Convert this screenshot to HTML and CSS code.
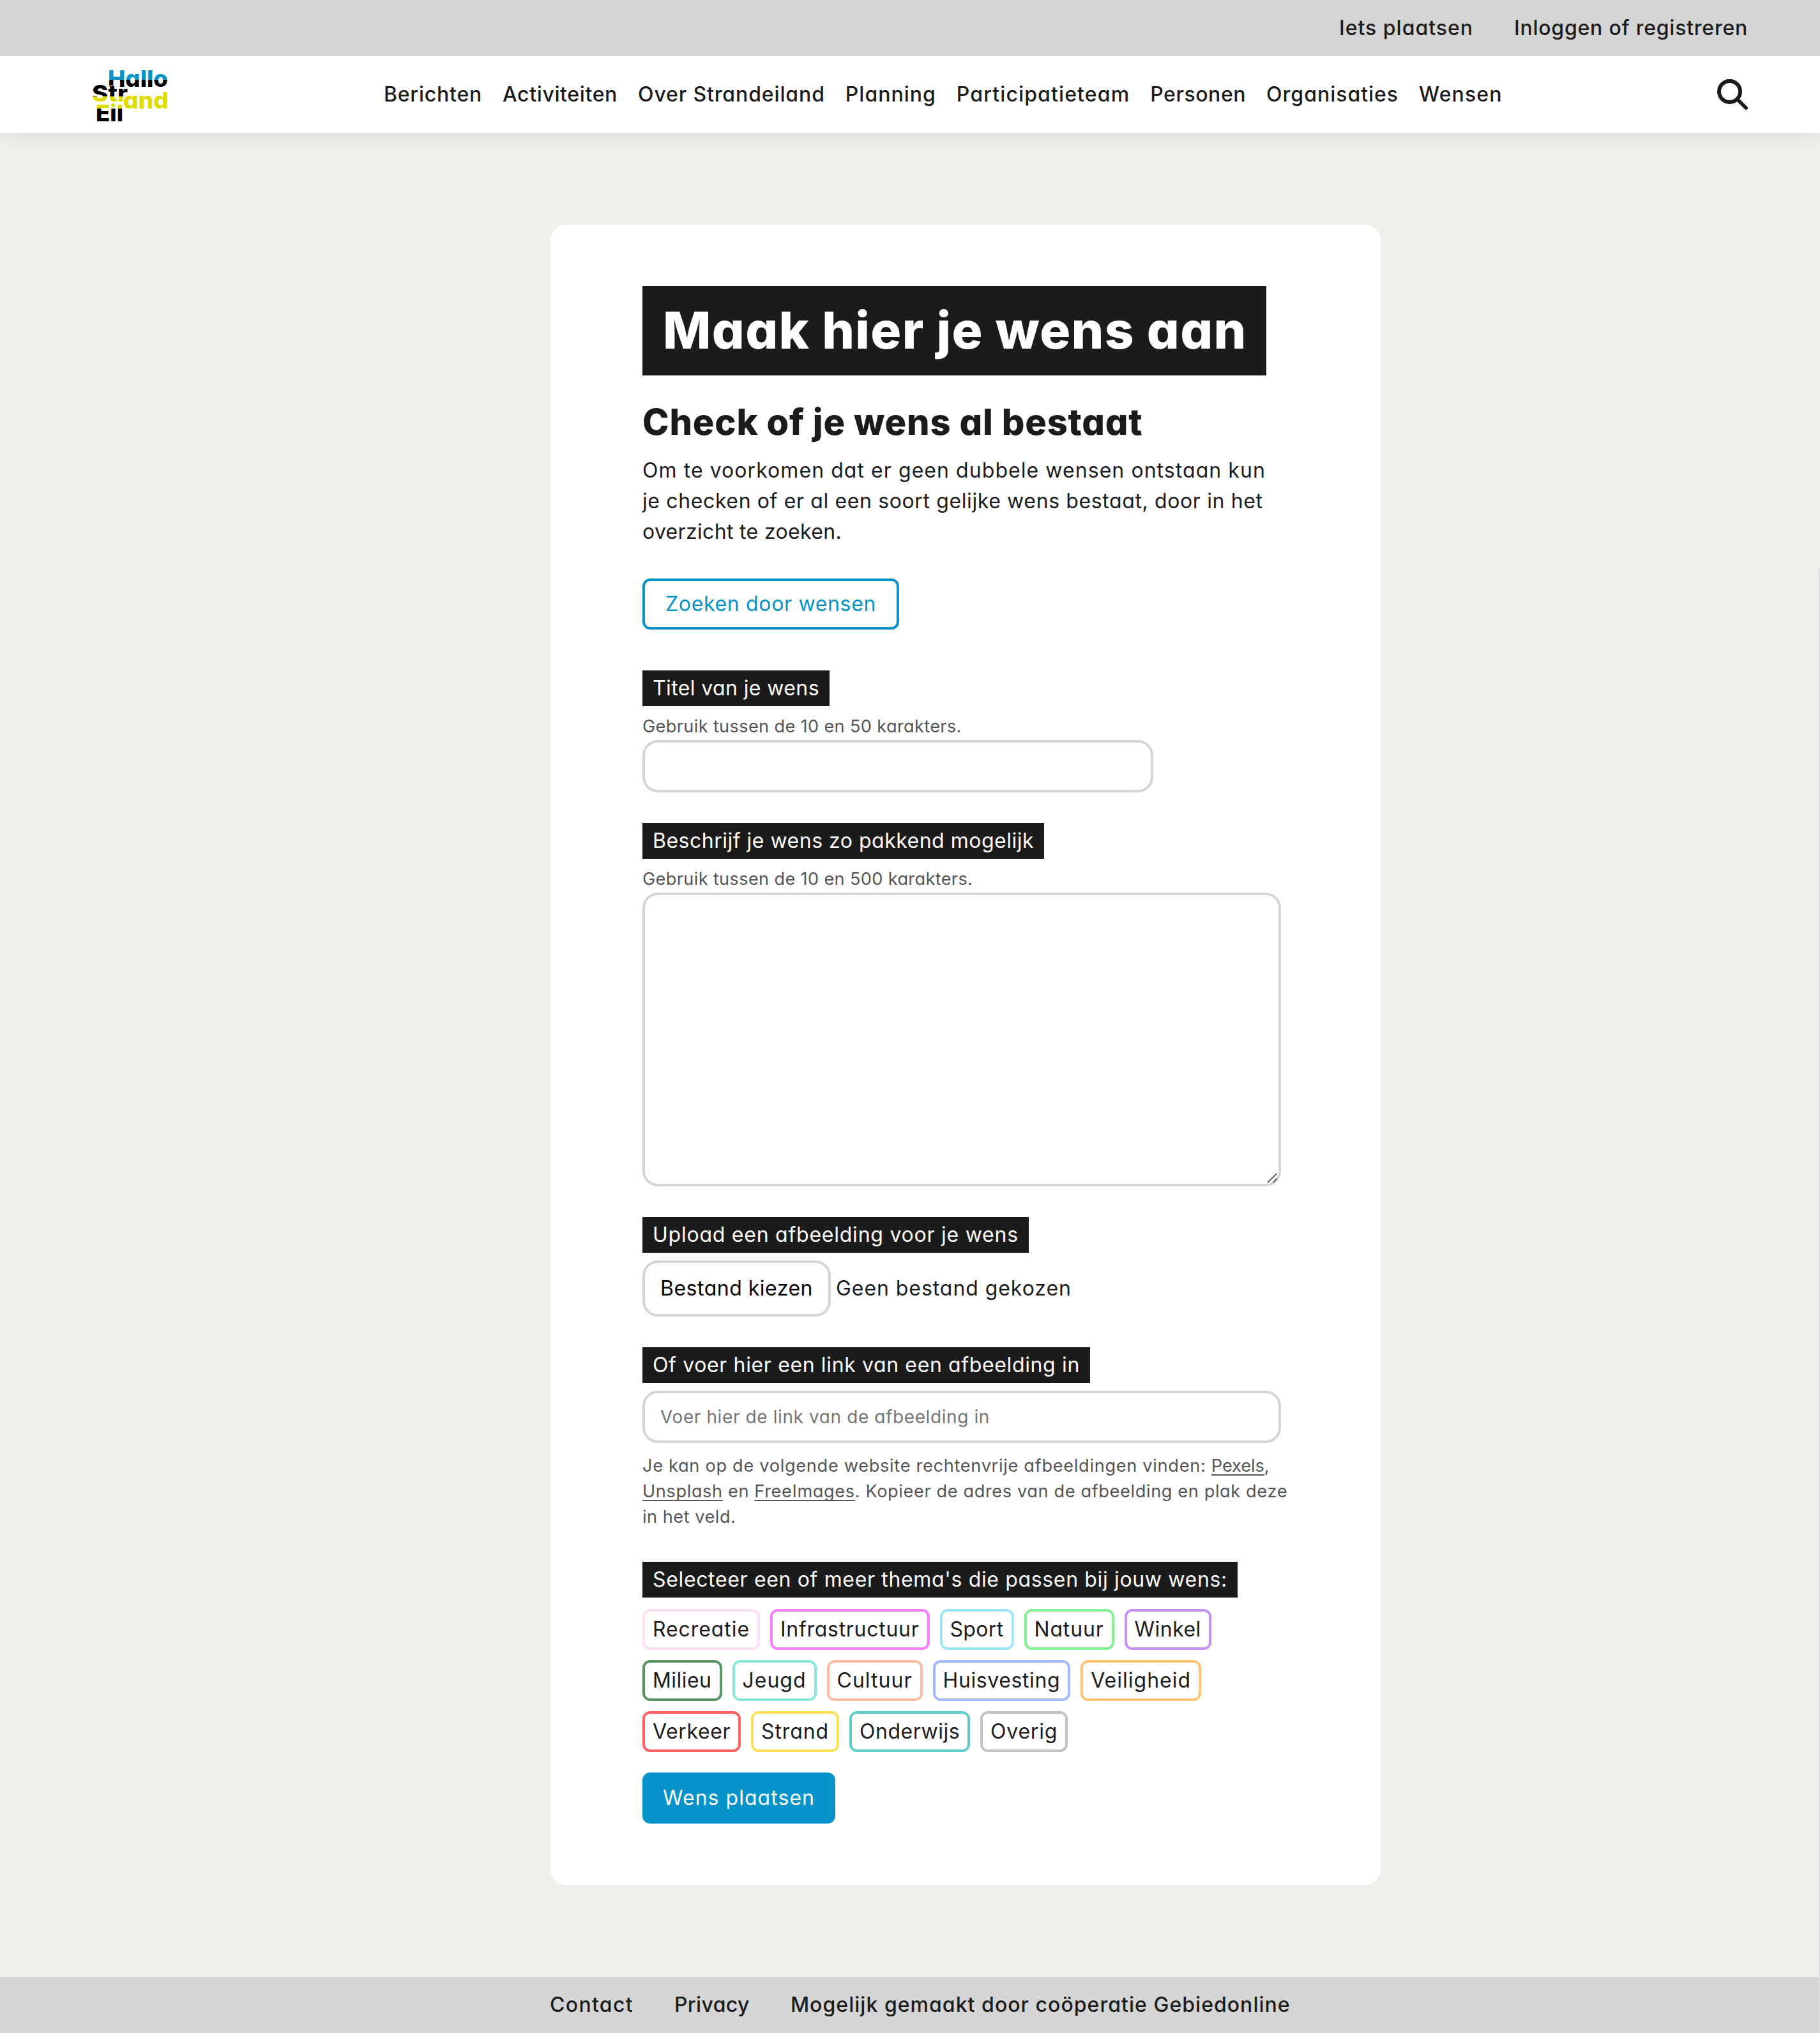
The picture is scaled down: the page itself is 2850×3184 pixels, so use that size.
FILE: index.html
```html
<!DOCTYPE html>
<html lang="nl">
<head>
<meta charset="utf-8">
<title>Maak hier je wens aan</title>
<link rel="stylesheet" href="styles.css">
</head>
<body>
<div class="topbar">
  <a class="ls-wide">Iets plaatsen</a>
  <a class="ls-mid">Inloggen of registreren</a>
</div>
<header class="header">
  <svg class="logo" width="120" height="84" viewBox="144 108 120 84" role="img" aria-label="Hallo Strand Eiland">
    <defs>
      <linearGradient id="hallo" gradientUnits="userSpaceOnUse" x1="0" y1="108" x2="0" y2="192">
        <stop offset=".205" stop-color="#0693c9"/><stop offset=".205" stop-color="#000"/>
      </linearGradient>
      <linearGradient id="str" gradientUnits="userSpaceOnUse" x1="0" y1="108" x2="0" y2="192">
        <stop offset=".512" stop-color="#000"/><stop offset=".512" stop-color="#dfdc00"/>
      </linearGradient>
      <linearGradient id="eil" gradientUnits="userSpaceOnUse" x1="0" y1="108" x2="0" y2="192">
        <stop offset=".738" stop-color="#dfdc00"/><stop offset=".738" stop-color="#000"/>
      </linearGradient>
    </defs>
    <text class="logo-text" x="169" y="136" textLength="94" lengthAdjust="spacingAndGlyphs" fill="url(#hallo)">Hallo</text>
    <text class="logo-text" x="144" y="159" textLength="56" lengthAdjust="spacingAndGlyphs" fill="url(#str)">Str</text>
    <text class="logo-text" x="193" y="170" textLength="71" lengthAdjust="spacingAndGlyphs" fill="#dfdc00">and</text>
    <text class="logo-text" x="150" y="190" textLength="43" lengthAdjust="spacingAndGlyphs" fill="url(#eil)">Eil</text>
  </svg>
  <nav class="nav">
    <a>Berichten</a>
    <a>Activiteiten</a>
    <a>Over Strandeiland</a>
    <a>Planning</a>
    <a>Participatieteam</a>
    <a>Personen</a>
    <a>Organisaties</a>
    <a>Wensen</a>
  </nav>
  <svg class="search" width="48" height="48" viewBox="0 0 48 48" fill="none" stroke="#1b1b1b" stroke-linecap="round">
    <circle cx="19.5" cy="19.4" r="16.5" stroke-width="6"/>
    <path d="M32 32L45.1 45.1" stroke-width="5.6"/>
  </svg>
</header>
<main class="main">
  <form class="card">
    <h1 class="title">Maak hier je wens aan</h1>
    <h2 class="subtitle">Check of je wens al bestaat</h2>
    <p class="intro">
      <span>Om te voorkomen dat er geen dubbele wensen ontstaan kun</span>
      <span>je checken of er al een soort gelijke wens bestaat, door in het</span>
      <span>overzicht te zoeken.</span>
    </p>
    <a class="btn btn-outline">Zoeken door wensen</a>

    <div class="field field-title">
      <label class="label label-title" for="titel">Titel van je wens</label>
      <p class="hint">Gebruik tussen de 10 en 50 karakters.</p>
      <input class="input input-short" id="titel" type="text">
    </div>

    <div class="field">
      <label class="label label-text" for="tekst">Beschrijf je wens zo pakkend mogelijk</label>
      <p class="hint">Gebruik tussen de 10 en 500 karakters.</p>
      <div class="textarea-wrap">
        <textarea class="input textarea" id="tekst"></textarea>
        <svg class="grip" width="18" height="18" viewBox="0 0 18 18" stroke="#555" stroke-width="1.8"><path d="M1 16L15.5 1.8M9.5 16L15.5 10"/></svg>
      </div>
    </div>

    <div class="field">
      <span class="label label-upload">Upload een afbeelding voor je wens</span>
      <div class="file">
        <button class="file-btn" type="button">Bestand kiezen</button>
        <span class="file-name">Geen bestand gekozen</span>
      </div>
    </div>

    <div class="field">
      <label class="label label-link" for="link">Of voer hier een link van een afbeelding in</label>
      <input class="input input-link" id="link" type="text" placeholder="Voer hier de link van de afbeelding in">
      <p class="help">
        <span>Je kan op de volgende website rechtenvrije afbeeldingen vinden: <u>Pexels</u>,</span>
        <span><u>Unsplash</u> en <u>FreeImages</u>. Kopieer de adres van de afbeelding en plak deze</span>
        <span>in het veld.</span>
      </p>
    </div>

    <div class="field field-themes">
      <span class="label label-themes">Selecteer een of meer thema's die passen bij jouw wens:</span>
      <div class="tags">
        <span class="tag recreatie">Recreatie</span>
        <span class="tag infrastructuur">Infrastructuur</span>
        <span class="tag sport">Sport</span>
        <span class="tag natuur">Natuur</span>
        <span class="tag winkel">Winkel</span>
        <span class="tag milieu">Milieu</span>
        <span class="tag jeugd">Jeugd</span>
        <span class="tag cultuur">Cultuur</span>
        <span class="tag huisvesting">Huisvesting</span>
        <span class="tag veiligheid">Veiligheid</span>
        <span class="tag verkeer">Verkeer</span>
        <span class="tag strand">Strand</span>
        <span class="tag onderwijs">Onderwijs</span>
        <span class="tag overig">Overig</span>
      </div>
    </div>
    <button class="btn btn-primary" type="button">Wens plaatsen</button>
  </form>
</main>
<footer class="footer">
  <a>Contact</a>
  <a>Privacy</a>
  <a>Mogelijk gemaakt door coöperatie Gebiedonline</a>
</footer>
<div class="scroll-thumb"></div>
</body>
</html>
```
FILE: styles.css
```css
* { box-sizing: border-box; margin: 0; padding: 0; }
body {
  position: relative;
  min-height: 3184px;
  background: #eff0ea;
  color: #1b1b1b;
  font: 400 32px/48px Inter, "Liberation Sans", sans-serif;
  font-feature-settings: "cv11";
  display: flex;
  flex-direction: column;
}
input, textarea, button { font: inherit; font-feature-settings: inherit; color: inherit; }

.topbar {
  position: relative;
  z-index: 1;
  display: flex;
  justify-content: flex-end;
  gap: 64px;
  height: 88px;
  padding: 20px 113px;
  background: #d5d5d5;
  font-weight: 500;
}
.ls-wide { letter-spacing: .98px; }
.ls-mid { letter-spacing: .76px; }

.header {
  display: flex;
  align-items: center;
  height: 120px;
  padding: 0 113px 0 144px;
  background: #fff;
  box-shadow: 0 0 32px rgba(0, 0, 0, .1);
}
.logo { margin-top: 4px; overflow: visible; }
.logo-text {
  font-size: 36px;
  font-weight: 800;
  stroke: #fff;
  stroke-width: 1.5px;
  paint-order: stroke;
}
.nav {
  display: flex;
  gap: 32px;
  margin-left: 337px;
  font-weight: 500;
  white-space: nowrap;
}
.nav a:nth-child(1) { letter-spacing: .78px; }
.nav a:nth-child(2) { letter-spacing: .63px; }
.nav a:nth-child(3) { letter-spacing: .88px; }
.nav a:nth-child(4) { letter-spacing: 1px; }
.nav a:nth-child(5) { letter-spacing: 1.12px; }
.nav a:nth-child(6) { letter-spacing: .57px; }
.nav a:nth-child(7) { letter-spacing: .98px; }
.nav a:nth-child(8) { letter-spacing: 1.1px; }
.search { margin-left: auto; }

.main { padding: 144px 0 144px 862px; }
.card {
  display: flex;
  flex-direction: column;
  align-items: flex-start;
  width: 1300px;
  height: 2600px;
  padding: 96px 144px;
  background: #fff;
  border-radius: 24px;
}
.title {
  width: 977px;
  height: 140px;
  padding: 0 32px 3px;
  background: #1b1b1b;
  color: #fff;
  font-size: 80px;
  font-weight: 800;
  line-height: 137px;
  letter-spacing: 1.35px;
  white-space: nowrap;
}
.subtitle {
  margin: 31px 0 10px;
  font-size: 56px;
  font-weight: 800;
  line-height: 84px;
  letter-spacing: .82px;
}
.intro span, .help span { display: block; white-space: nowrap; }
.intro span:nth-child(1) { letter-spacing: 1.06px; }
.intro span:nth-child(2) { letter-spacing: .62px; }
.intro span:nth-child(3) { letter-spacing: .34px; }

.btn { border-radius: 12px; height: 80px; border: 0; text-align: left; white-space: nowrap; }
.btn-outline {
  width: 402px;
  margin-top: 49px;
  padding: 12px 32px;
  border: 4px solid #0693c9;
  color: #0693c9;
  letter-spacing: .67px;
}
.btn-primary {
  width: 302px;
  margin-top: 32px;
  padding: 16px 32px;
  background: #0693c9;
  color: #fff;
  letter-spacing: 1.04px;
}

.field { display: flex; flex-direction: column; align-items: flex-start; margin-top: 48px; }
.field-title { margin-top: 64px; }
.field-themes { margin-top: 50px; }
.label {
  height: 56px;
  padding: 4px 16px;
  background: #1b1b1b;
  color: #fff;
  white-space: nowrap;
}
.label-title { letter-spacing: .39px; }
.label-text { letter-spacing: .5px; }
.label-upload { letter-spacing: .76px; }
.label-link { letter-spacing: .63px; }
.label-themes { letter-spacing: .65px; }

.hint {
  margin-top: 12px;
  padding-bottom: 1px;
  color: #555;
  font-size: 27.2px;
  line-height: 40px;
  letter-spacing: .33px;
}
.help {
  margin-top: 16px;
  color: #555;
  font-size: 27.2px;
  line-height: 40px;
}
.help span:nth-child(1) { letter-spacing: .68px; }
.help span:nth-child(1) u { letter-spacing: -.1px; }
.help span:nth-child(2) { letter-spacing: .6px; }
.help span:nth-child(3) { letter-spacing: .5px; }
.help u { text-decoration-thickness: 2px; text-underline-offset: 4px; text-decoration-skip-ink: none; }

.input {
  display: block;
  width: 1000px;
  height: 82px;
  padding: 16px 24px;
  border: 4px solid #d5d5d5;
  border-radius: 24px;
  background: #fff;
  font-size: 28px;
  line-height: 42px;
  letter-spacing: .6px;
  outline: 0;
}
.input::placeholder { color: #757575; opacity: 1; }
.input-short { width: 800px; }
.input-link { margin-top: 12px; }
.textarea-wrap { position: relative; }
.textarea { height: 460px; resize: none; }
.grip { position: absolute; right: 4px; bottom: 4px; }

.file { display: flex; align-items: center; gap: 8px; margin-top: 12px; }
.file-btn {
  width: 295px;
  height: 88px;
  padding: 16px 24px;
  border: 4px solid #d5d5d5;
  border-radius: 24px;
  background: #fff;
  color: #000;
  letter-spacing: .5px;
  text-align: left;
  white-space: nowrap;
}
.file-name { letter-spacing: .94px; }

.tags { display: flex; flex-wrap: wrap; gap: 16px; width: 900px; margin-top: 18px; }
.tag { height: 64px; padding: 4px 12px; border: 4px solid; border-radius: 12px; }
.recreatie { border-color: #ffdff6; letter-spacing: .92px; }
.infrastructuur { border-color: #f97fff; letter-spacing: .72px; }
.sport { border-color: #9be7f6; letter-spacing: .34px; }
.natuur { border-color: #80f293; letter-spacing: .82px; }
.winkel { border-color: #c591f2; letter-spacing: .48px; }
.milieu { border-color: #5b9364; letter-spacing: .46px; }
.jeugd { border-color: #8be8d6; letter-spacing: .99px; }
.cultuur { border-color: #ffbca3; letter-spacing: 1.02px; }
.huisvesting { border-color: #a5b9ff; letter-spacing: .6px; }
.veiligheid { border-color: #ffc575; letter-spacing: 1.01px; }
.verkeer { border-color: #ff6060; letter-spacing: .6px; }
.strand { border-color: #ffe159; letter-spacing: .9px; }
.onderwijs { border-color: #62cdca; letter-spacing: .5px; }
.overig { border-color: #c3c3c3; letter-spacing: .76px; }

.footer {
  display: flex;
  gap: 64px;
  height: 88px;
  padding: 20px 0 20px 861px;
  background: #d5d5d5;
  font-weight: 500;
}
.footer a:nth-child(1) { letter-spacing: 1.3px; }
.footer a:nth-child(2) { letter-spacing: .4px; }
.footer a:nth-child(3) { letter-spacing: 1.03px; }

/* Slim scroll indicator along the right edge of the page */
.scroll-thumb {
  position: absolute;
  z-index: 2;
  top: 890px;
  right: 0;
  bottom: 0;
  width: 2px;
  background: #dedede;
}
```
